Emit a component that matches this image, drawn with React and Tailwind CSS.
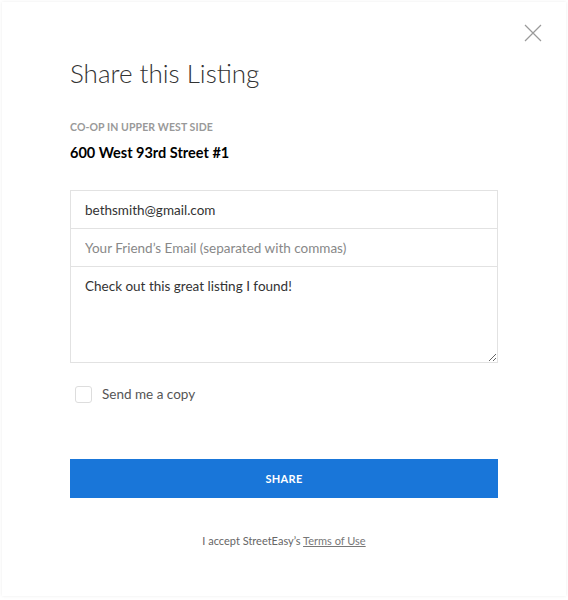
import React from "react";
import { useState } from "react";

export default function App() {
  const [copy, setCopy] = useState(false);

  return (
    <div className="w-[568px] h-[600px] bg-white p-[2px] pb-[4px] font-['Lato','Noto_Sans',sans-serif]">
      <div className="relative h-full w-full bg-white shadow-[0_0_3px_rgba(0,0,0,0.08)]">
        {/* close */}
        <button className="absolute right-[23px] top-[21px] w-[20px] h-[20px] flex items-center justify-center">
          <svg width="18" height="18" viewBox="0 0 18 18" fill="none">
            <path d="M1 1L17 17M17 1L1 17" stroke="#9a9a9a" strokeWidth="1.2" />
          </svg>
        </button>

        <div className="flex flex-col px-[68px] pt-[55px]">
          <h1 className="text-[26px] font-light text-[#333] leading-[33px]">
            Share this Listing
          </h1>

          <div className="mt-[30px] text-[10.5px] font-bold text-[#999] tracking-[0.1px] leading-[14px]">
            CO-OP IN UPPER WEST SIDE
          </div>
          <div className="mt-[9px] text-[14.5px] font-bold text-black leading-[20px]">
            600 West 93rd Street #1
          </div>

          <div className="mt-[27px] flex flex-col border border-[#e2e2e2]">
            <input
              type="text"
              defaultValue="bethsmith@gmail.com"
              className="h-[38px] px-[14px] text-[13.5px] text-[#333] border-b border-[#e2e2e2] outline-none"
            />
            <input
              type="text"
              placeholder="Your Friend’s Email (separated with commas)"
              className="h-[38px] px-[14px] text-[13.5px] text-[#333] placeholder:text-[#888] border-b border-[#e2e2e2] outline-none"
            />
            <textarea
              defaultValue="Check out this great listing I found!"
              className="h-[95px] px-[14px] py-[9px] text-[13.5px] text-[#333] leading-[20px] outline-none resize-y"
            />
          </div>

          <label className="mt-[21px] ml-[5px] flex items-center gap-[10px] cursor-pointer">
            <input
              type="checkbox"
              checked={copy}
              onChange={() => setCopy(!copy)}
              className="appearance-none w-[17px] h-[17px] border border-[#ddd] rounded-[3px] checked:bg-[#1976d9]"
            />
            <span className="text-[13.5px] text-[#555]">Send me a copy</span>
          </label>

          <button className="mt-[55px] h-[39px] bg-[#1976d9] text-white text-[11px] font-bold tracking-[0.3px]">
            SHARE
          </button>

          <div className="mt-[35px] text-center text-[11px] text-[#666]">
            I accept StreetEasy’s{" "}
            <a href="#" className="underline text-[#777]">
              Terms of Use
            </a>
          </div>
        </div>
      </div>
    </div>
  );
}
